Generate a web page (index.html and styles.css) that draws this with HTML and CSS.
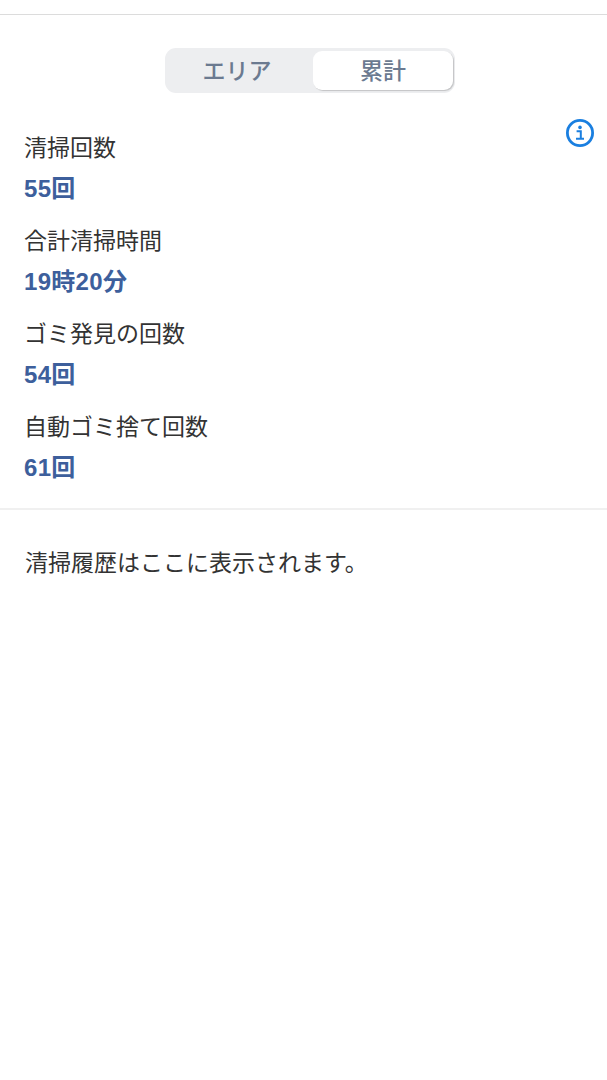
FILE: index.html
```html
<!DOCTYPE html>
<html lang="ja">
<head>
    <meta charset="UTF-8">
    <meta name="viewport" content="width=device-width, initial-scale=1.0">
    <title>清掃履歴</title>
    <link rel="stylesheet" href="styles.css">
</head>
<body>

<div class="top-line"></div>

<div class="tabs-wrap">
    <div class="tabs">
        <div class="tab">エリア</div>
        <div class="tab active">累計</div>
    </div>
</div>

<div class="stats">
    <svg class="info" width="30" height="30" viewBox="0 0 30 30">
        <circle cx="15" cy="15" r="12.6" fill="none" stroke="#1a7fe0" stroke-width="2.8"/>
        <circle cx="15" cy="9.4" r="1.8" fill="#1a7fe0"/>
        <path d="M11.6 13.2h4.2v7.6M11 20.8h8" fill="none" stroke="#1a7fe0" stroke-width="2"/>
    </svg>

    <div class="stat">
        <div class="stat-name">清掃回数</div>
        <div class="stat-value">55回</div>
    </div>
    <div class="stat">
        <div class="stat-name">合計清掃時間</div>
        <div class="stat-value">19時20分</div>
    </div>
    <div class="stat">
        <div class="stat-name">ゴミ発見の回数</div>
        <div class="stat-value">54回</div>
    </div>
    <div class="stat">
        <div class="stat-name">自動ゴミ捨て回数</div>
        <div class="stat-value">61回</div>
    </div>
</div>

<p class="history">清掃履歴はここに表示されます。</p>

</body>
</html>
```

FILE: styles.css
```css
* {
    box-sizing: border-box;
    margin: 0;
    padding: 0;
}
body {
    font-family: "Noto Sans CJK JP", "Liberation Sans", sans-serif;
    background-color: #ffffff;
    color: #333;
}
.top-line {
    height: 15px;
    border-bottom: 1px solid #dcdcdc;
}
.tabs-wrap {
    display: flex;
    justify-content: center;
    padding-top: 33px;
    padding-left: 13px;
}
.tabs {
    display: flex;
    width: 290px;
    height: 45px;
    padding: 3px 2px;
    background-color: #edeef0;
    border-radius: 11px;
}
.tab {
    flex: 1;
    display: flex;
    align-items: center;
    justify-content: center;
    padding-right: 6px;
    padding-bottom: 3px;
    font-size: 23px;
    font-weight: 500;
    color: #6b7a90;
}
.tab.active {
    flex: none;
    width: 140px;
    padding-right: 0;
    background-color: #ffffff;
    border-radius: 9px;
    box-shadow: 1px 1px 1px rgba(0, 0, 0, 0.18);
}
.stats {
    position: relative;
    padding: 34px 24px 9px;
    border-bottom: 2px solid #f0f0f0;
}
.info {
    position: absolute;
    top: 25px;
    right: 12px;
}
.stat {
    height: 93px;
}
.stat-name {
    font-size: 23px;
    line-height: 38px;
    color: #333;
}
.stat-value {
    font-family: "Liberation Sans", "Noto Sans CJK JP", sans-serif;
    font-size: 24px;
    line-height: 48px;
    font-weight: 600;
    letter-spacing: 0.3px;
    color: #3d5f9c;
}
.history {
    font-size: 23px;
    line-height: 34px;
    padding: 34px 25px 0;
    color: #333;
}
```
